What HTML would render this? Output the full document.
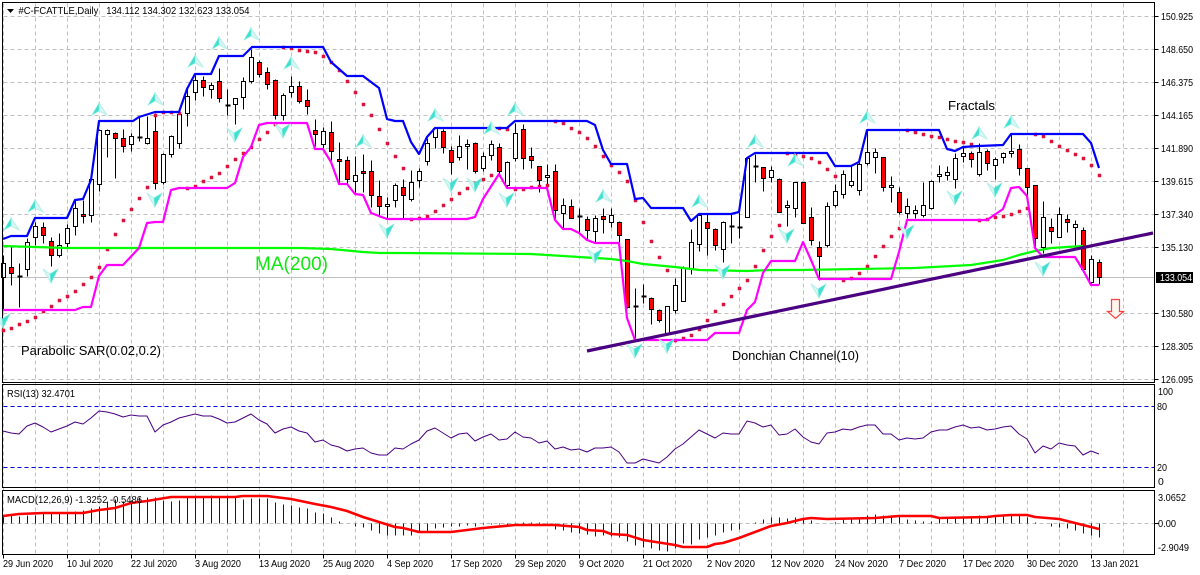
<!DOCTYPE html>
<html lang="en"><head><meta charset="utf-8"><title>#C-FCATTLE,Daily</title>
<style>
html,body{margin:0;padding:0;background:#fff;width:1200px;height:575px;overflow:hidden}
svg{display:block}
text{font-family:"Liberation Sans",sans-serif;font-size:10.4px;fill:#000}
.a{font-size:13.3px}
</style></head><body>
<svg xmlns="http://www.w3.org/2000/svg" width="1200" height="575" viewBox="0 0 1200 575">
<defs>
<g id="u"><polygon points="0,0 8,12 0,8" fill="#d6f7f3" stroke="#b4f0ea" stroke-width="1"/><polygon points="0,0 -7,12 0,8" fill="#40e0d0" stroke="#7feadf" stroke-width=".6"/></g>
<g id="d"><polygon points="0,0 -8,-14 -1,-9" fill="#d6f7f3" stroke="#b4f0ea" stroke-width="1"/><polygon points="0,0 7,-14 -1,-9" fill="#40e0d0" stroke="#7feadf" stroke-width=".6"/></g>
</defs>
<rect width="1200" height="575" fill="#fff"/>
<g transform="translate(.5 .5)" fill="none" shape-rendering="crispEdges">
<!-- grid -->
<path stroke="#c0c0c0" stroke-dasharray="4 3" d="M3 3V554M35 3V554M67 3V554M99 3V554M131 3V554M163 3V554M195 3V554M227 3V554M259 3V554M291 3V554M323 3V554M355 3V554M387 3V554M419 3V554M451 3V554M483 3V554M515 3V554M547 3V554M579 3V554M611 3V554M643 3V554M675 3V554M707 3V554M739 3V554M771 3V554M803 3V554M835 3V554M867 3V554M899 3V554M931 3V554M963 3V554M995 3V554M1027 3V554M1059 3V554M1091 3V554M1123 3V554"/>
<path stroke="#c0c0c0" stroke-dasharray="4 3" d="M3 16H1154M3 49H1154M3 82H1154M3 115H1154M3 148H1154M3 181H1154M3 214H1154M3 247H1154M3 313H1154M3 346H1154M3 379H1154M3 523H1154"/>
<path stroke="#c0c0c0" d="M3 277H1154"/>
<!-- wicks -->
<path stroke="#000" d="M3 255V310M11 247V285M19 263V307M27 238V276M35 222V245M43 222V243M51 237V266M59 233V257M67 224V247M75 200V235M83 200V223M91 179V222M99 129V191M107 129V157M115 132V178M123 129V152M131 133V151M139 117V141M147 116V144M155 113V189M163 153V184M171 135V157M179 112V148M187 88V126M195 75V100M203 76V96M211 82V98M219 68V102M227 89V115M235 98V124M243 77V109M251 49V83M259 60V77M267 67V89M275 79V119M283 93V120M291 76V97M299 81V103M307 89V114M315 119V146M323 127V150M331 121V160M339 142V183M347 156V184M355 156V192M363 154V192M371 160V207M379 180V217M387 197V218M395 183V207M403 179V218M411 170V201M419 168V187M427 138V165M435 128V148M443 129V153M451 146V174M459 135V160M467 139V169M475 142V173M483 152V171M491 140V160M499 143V174M507 161V188M515 123V161M523 124V169M531 147V168M539 166V192M547 164V192M555 164V218M563 198V229M571 199V218M579 208V233M587 216V240M595 215V243M603 208V233M611 208V227M619 221V243M627 239V308M635 288V338M643 284V303M651 297V324M659 309V322M667 306V334M675 278V313M683 266V301M691 229V274M699 214V251M707 214V255M715 228V250M723 221V262M731 213V243M739 212V238M747 157V217M755 154V182M763 167V191M771 166V182M779 178V212M787 200V226M795 182V217M803 182V223M811 207V245M819 241V280M827 202V247M835 184V207M843 170V198M851 166V187M859 162V195M867 130V165M875 148V173M883 157V191M891 176V202M899 187V214M907 198V218M915 205V218M923 182V217M931 180V209M939 165V182M947 166V180M955 153V188M963 147V162M971 151V167M979 143V176M987 149V170M995 157V179M1003 152V163M1011 134V157M1019 144V175M1027 168V200M1035 185V248M1043 201V253M1051 218V243M1059 207V237M1067 214V232M1075 220V247M1083 227V272M1091 255V283M1099 259V284"/>
<!-- doji -->
<path stroke="#000" stroke-width="2" d="M17 276h5M137 137h5M225 105h5M577 216h5M633 306h5M641 296h5M729 226h5M737 227h5M753 166h5"/>
<!-- white bodies -->
<path stroke="#000" fill="#fff" d="M1 263h4v14h-4zM25 242h4v27h-4zM33 226h4v11h-4zM57 245h4v10h-4zM65 228h4v15h-4zM73 208h4v18h-4zM89 179h4v36h-4zM97 130h4v54h-4zM105 130h4v4h-4zM129 136h4v8h-4zM145 138h4v5h-4zM161 154h4v28h-4zM169 136h4v18h-4zM177 114h4v29h-4zM185 96h4v17h-4zM193 80h4v12h-4zM209 85h4v4h-4zM233 98h4v6h-4zM241 81h4v16h-4zM249 57h4v24h-4zM281 95h4v20h-4zM289 86h4v6h-4zM321 131h4v13h-4zM353 175h4v6h-4zM385 204h4v2h-4zM393 185h4v15h-4zM409 182h4v17h-4zM417 171h4v9h-4zM425 143h4v18h-4zM433 128h4v9h-4zM457 146h4v11h-4zM465 144h4v2h-4zM481 156h4v12h-4zM489 144h4v11h-4zM505 162h4v23h-4zM513 133h4v25h-4zM545 175h4v2h-4zM561 205h4v8h-4zM593 218h4v13h-4zM609 215h4v7h-4zM665 306h4v27h-4zM673 285h4v25h-4zM681 268h4v33h-4zM689 242h4v27h-4zM697 215h4v29h-4zM721 222h4v27h-4zM745 158h4v59h-4zM769 170h4v7h-4zM785 205h4v2h-4zM793 182h4v26h-4zM825 206h4v39h-4zM833 191h4v14h-4zM841 174h4v20h-4zM849 181h4v4h-4zM857 164h4v26h-4zM865 152h4v11h-4zM873 152h4v5h-4zM889 185h4v2h-4zM905 206h4v7h-4zM913 210h4v3h-4zM921 205h4v10h-4zM929 181h4v27h-4zM937 174h4v2h-4zM945 172h4v3h-4zM953 158h4v21h-4zM961 153h4v3h-4zM977 152h4v22h-4zM993 159h4v6h-4zM1001 153h4v4h-4zM1009 151h4v2h-4zM1041 217h4v30h-4zM1057 214h4v23h-4zM1073 224h4v3h-4zM1089 259h4v23h-4z"/>
<!-- red bodies -->
<path stroke="#000" fill="#f00" d="M9 267h4v6h-4zM41 227h4v8h-4zM49 241h4v14h-4zM81 214h4v2h-4zM113 133h4v5h-4zM121 138h4v8h-4zM153 131h4v52h-4zM201 80h4v7h-4zM217 81h4v17h-4zM257 62h4v12h-4zM265 72h4v12h-4zM273 80h4v35h-4zM297 86h4v15h-4zM305 100h4v6h-4zM313 130h4v4h-4zM329 132h4v19h-4zM337 159h4v2h-4zM345 160h4v19h-4zM361 171h4v2h-4zM369 171h4v24h-4zM377 196h4v10h-4zM401 187h4v8h-4zM441 131h4v16h-4zM449 150h4v12h-4zM473 143h4v28h-4zM497 147h4v24h-4zM521 129h4v29h-4zM529 156h4v4h-4zM537 166h4v14h-4zM553 171h4v39h-4zM569 206h4v12h-4zM585 219h4v11h-4zM601 216h4v3h-4zM617 222h4v13h-4zM625 239h4v68h-4zM649 298h4v11h-4zM657 310h4v10h-4zM705 222h4v6h-4zM713 229h4v16h-4zM761 167h4v11h-4zM777 179h4v33h-4zM801 182h4v41h-4zM809 217h4v23h-4zM817 247h4v9h-4zM881 157h4v30h-4zM897 192h4v20h-4zM969 153h4v6h-4zM985 151h4v12h-4zM1017 149h4v19h-4zM1025 168h4v19h-4zM1033 185h4v53h-4zM1049 227h4v4h-4zM1065 219h4v3h-4zM1081 230h4v39h-4zM1097 262h4v15h-4z"/>
<!-- MACD bars -->
<path stroke="#0000e0" d="M3 523V515M11 523V515M19 523V516M27 523V515M35 523V515M43 523V513M51 523V513M59 523V513M67 523V513M75 523V511M83 523V510M91 523V508M99 523V506M107 523V501M115 523V499M123 523V501M131 523V500M139 523V497M147 523V497M155 523V497M163 523V500M171 523V501M179 523V500M187 523V497M195 523V497M203 523V497M211 523V495M219 523V497M227 523V497M235 523V497M243 523V499M251 523V498M259 523V498M267 523V498M275 523V502M283 523V504M291 523V505M299 523V507M307 523V508M315 523V512M323 523V513M331 523V517M339 523V521M355 523V526M363 523V527M371 523V530M379 523V533M387 523V535M395 523V535M403 523V535M411 523V535M419 523V532M427 523V531M435 523V528M443 523V527M451 523V526M459 523V526M467 523V525M475 523V526M483 523V524M491 523V524M499 523V524M507 523V524M515 523V524M523 523V522M531 523V522M539 523V522M547 523V524M555 523V529M563 523V530M571 523V532M579 523V533M587 523V534M595 523V536M603 523V535M611 523V536M619 523V537M627 523V541M635 523V545M643 523V547M651 523V548M659 523V550M667 523V551M675 523V548M683 523V543M691 523V544M699 523V539M707 523V537M715 523V535M723 523V532M731 523V530M739 523V529M755 523V522M763 523V519M771 523V517M779 523V517M787 523V518M795 523V517M803 523V518M811 523V520M835 523V522M843 523V519M851 523V519M859 523V517M867 523V515M875 523V514M883 523V515M891 523V515M899 523V516M907 523V519M915 523V520M923 523V521M931 523V521M939 523V518M947 523V518M955 523V518M963 523V516M971 523V516M979 523V515M987 523V516M995 523V516M1003 523V516M1011 523V515M1019 523V515M1027 523V517M1035 523V522M1051 523V526M1059 523V527M1067 523V528M1075 523V530M1083 523V533M1091 523V535M1099 523V537"/>
<!-- RSI levels -->
<path stroke="#0000e0" stroke-dasharray="4 3" d="M3 406H1154M3 467H1154"/>
<!-- frames -->
<path stroke="#000" d="M2 2H1154V382H2ZM2 384H1154V487H2ZM2 490H1154V554H2Z"/>
<path stroke="#000" d="M1154 16h4M1154 49h4M1154 82h4M1154 115h4M1154 148h4M1154 181h4M1154 214h4M1154 247h4M1154 313h4M1154 346h4M1154 379h4M1154 523h4M3 554v4M67 554v4M131 554v4M195 554v4M259 554v4M323 554v4M387 554v4M451 554v4M515 554v4M579 554v4M643 554v4M707 554v4M771 554v4M835 554v4M899 554v4M963 554v4M1027 554v4M1091 554v4"/>
</g>
<!-- SAR -->
<g fill="#dc143c" stroke="#dc143c" stroke-width=".5"><path d="M2 329h3v3h-3zM10 327h3v3h-3zM18 323h3v3h-3zM26 320h3v3h-3zM34 316h3v3h-3zM42 310h3v3h-3zM50 305h3v3h-3zM58 299h3v3h-3zM66 295h3v3h-3zM74 290h3v3h-3zM82 283h3v3h-3zM90 276h3v3h-3zM98 266h3v3h-3zM106 248h3v3h-3zM114 233h3v3h-3zM122 219h3v3h-3zM130 208h3v3h-3zM138 197h3v3h-3zM146 186h3v3h-3zM154 114h3v3h-3zM162 111h3v3h-3zM170 111h3v3h-3zM178 112h3v3h-3zM186 187h3v3h-3zM194 185h3v3h-3zM202 180h3v3h-3zM210 176h3v3h-3zM218 172h3v3h-3zM226 165h3v3h-3zM234 158h3v3h-3zM242 152h3v3h-3zM250 146h3v3h-3zM258 138h3v3h-3zM266 131h3v3h-3zM274 123h3v3h-3zM282 46h3v3h-3zM290 47h3v3h-3zM298 49h3v3h-3zM306 50h3v3h-3zM314 51h3v3h-3zM322 55h3v3h-3zM330 61h3v3h-3zM338 69h3v3h-3zM346 80h3v3h-3zM354 91h3v3h-3zM362 103h3v3h-3zM370 114h3v3h-3zM378 128h3v3h-3zM386 142h3v3h-3zM394 155h3v3h-3zM402 167h3v3h-3zM410 218h3v3h-3zM418 217h3v3h-3zM426 215h3v3h-3zM434 210h3v3h-3zM442 204h3v3h-3zM450 198h3v3h-3zM458 192h3v3h-3zM466 187h3v3h-3zM474 182h3v3h-3zM482 178h3v3h-3zM490 174h3v3h-3zM498 127h3v3h-3zM506 128h3v3h-3zM514 188h3v3h-3zM522 188h3v3h-3zM530 186h3v3h-3zM538 185h3v3h-3zM546 184h3v3h-3zM554 120h3v3h-3zM562 122h3v3h-3zM570 127h3v3h-3zM578 131h3v3h-3zM586 137h3v3h-3zM594 145h3v3h-3zM602 155h3v3h-3zM610 164h3v3h-3zM618 171h3v3h-3zM626 180h3v3h-3zM634 199h3v3h-3zM642 221h3v3h-3zM650 240h3v3h-3zM658 256h3v3h-3zM666 269h3v3h-3zM674 339h3v3h-3zM682 337h3v3h-3zM690 334h3v3h-3zM698 328h3v3h-3zM706 319h3v3h-3zM714 310h3v3h-3zM722 303h3v3h-3zM730 295h3v3h-3zM738 287h3v3h-3zM746 279h3v3h-3zM754 265h3v3h-3zM762 249h3v3h-3zM770 235h3v3h-3zM778 224h3v3h-3zM786 152h3v3h-3zM794 154h3v3h-3zM802 155h3v3h-3zM810 157h3v3h-3zM818 161h3v3h-3zM826 168h3v3h-3zM834 175h3v3h-3zM842 279h3v3h-3zM850 277h3v3h-3zM858 272h3v3h-3zM866 265h3v3h-3zM874 255h3v3h-3zM882 245h3v3h-3zM890 235h3v3h-3zM898 227h3v3h-3zM906 129h3v3h-3zM914 131h3v3h-3zM922 133h3v3h-3zM930 135h3v3h-3zM938 136h3v3h-3zM946 138h3v3h-3zM954 140h3v3h-3zM962 141h3v3h-3zM970 143h3v3h-3zM978 219h3v3h-3zM986 218h3v3h-3zM994 216h3v3h-3zM1002 215h3v3h-3zM1010 213h3v3h-3zM1018 210h3v3h-3zM1026 207h3v3h-3zM1034 133h3v3h-3zM1042 135h3v3h-3zM1050 140h3v3h-3zM1058 145h3v3h-3zM1066 149h3v3h-3zM1074 153h3v3h-3zM1082 157h3v3h-3zM1090 164h3v3h-3zM1098 174h3v3h-3z"/></g>
<!-- lines -->
<g fill="none" stroke-linejoin="round">
<polyline stroke="#00ff00" stroke-width="2.2" points="3,246 67,248 227,248 300,248 331,249 363,252 380,253 400,253 531,254 563,256 611,259 627,261 643,264 675,267 699,270 747,271 771,270 800,270 915,268 971,265 1003,260 1019,255 1035,251 1051,248 1083,246"/>
<polyline stroke="#ff00ff" stroke-width="2.2" points="3,310 75,310 83,307 91,307 99,276 107,265 123,265 139,248 147,223 155,222 163,222 171,190 179,188 227,188 235,183 243,157 251,147 259,125 267,123 307,123 315,149 323,149 331,162 339,184 347,184 355,194 363,195 371,213 379,216 387,219 467,219 475,217 483,199 499,174 507,188 547,188 555,220 563,229 571,229 579,233 587,240 595,243 619,243 627,318 635,340 707,340 715,333 739,333 747,310 755,302 763,273 771,261 795,261 803,242 811,260 819,279 891,279 899,252 907,220 987,220 1003,209 1011,188 1019,187 1027,196 1035,248 1043,257 1075,257 1083,270 1091,285 1099,285"/>
<polyline stroke="#0000ff" stroke-width="2.2" points="3,239 11,236 27,236 35,218 67,218 75,200 83,199 91,180 99,121 133,121 139,117 155,112 179,112 187,89 195,74 211,74 219,56 243,56 252,47 323,47 331,62 347,76 363,76 379,88 387,119 395,121 403,121 411,142 419,154 427,137 435,128 507,128 515,121 587,121 595,125 603,150 611,164 627,164 635,199 643,198 651,208 683,208 691,221 699,214 731,214 739,212 747,158 755,153 827,153 835,166 851,166 859,162 867,130 939,130 947,149 955,151 963,147 979,146 1003,145 1011,134 1083,134 1091,143 1099,168"/>
<polyline stroke="#ff0000" stroke-width="2.6" points="3,516 19,514 43,513 83,513 99,510 115,508 131,503 147,501 171,497 235,497 243,496 267,496 291,499 315,504 331,507 347,511 363,517 379,522 395,527 403,528 419,532 451,532 483,528 515,525 555,525 579,527 587,530 603,531 611,534 627,535 643,540 675,545 683,547 707,547 715,544 723,543 739,538 771,526 787,523 803,519 811,518 827,519 875,518 899,516 931,516 939,518 987,517 995,516 1011,515 1027,515 1035,517 1059,519 1075,523 1099,529"/>
<polyline stroke="#4b0082" stroke-width="1" points="3,431 11,433 19,434 27,426 35,423 43,427 51,432 59,429 67,426 75,422 83,424 91,418 99,411 107,412 115,414 123,417 131,415 139,416 147,416 155,432 163,425 171,422 179,418 187,416 195,414 203,416 211,416 219,419 227,423 235,422 243,418 251,414 259,420 267,424 275,433 283,429 291,427 299,431 307,433 315,442 323,440 331,445 339,447 347,451 355,449 363,448 371,453 379,455 387,455 395,448 403,449 411,444 419,440 427,431 435,428 443,433 451,438 459,434 467,433 475,441 483,437 491,434 499,440 507,439 515,432 523,437 531,438 539,443 547,441 555,449 563,447 571,450 579,449 587,452 595,448 603,448 611,447 619,452 627,463 635,463 643,459 651,461 659,463 667,457 675,449 683,444 691,437 699,430 707,434 715,438 723,433 731,434 739,434 747,421 755,423 763,427 771,425 779,435 787,434 795,429 803,437 811,442 819,444 827,433 835,432 843,429 851,430 859,427 867,425 875,425 883,434 891,434 899,440 907,438 915,439 923,438 931,432 939,430 947,430 955,427 963,425 971,428 979,427 987,430 995,429 1003,427 1011,426 1019,434 1027,439 1035,453 1043,446 1051,449 1059,443 1067,445 1075,446 1083,455 1091,451 1099,454"/>
<line x1="587" y1="351" x2="1153" y2="233" stroke="#4b0082" stroke-width="3.2"/>
</g>
<!-- fractals -->
<use href="#u" x="99" y="103"/><use href="#u" x="155" y="93"/><use href="#u" x="195" y="55"/><use href="#u" x="219" y="37"/><use href="#u" x="251" y="28"/><use href="#u" x="291" y="57"/><use href="#u" x="363" y="135"/><use href="#u" x="435" y="109"/><use href="#u" x="515" y="103"/><use href="#u" x="491" y="122"/><use href="#u" x="603" y="190"/><use href="#u" x="699" y="195"/><use href="#u" x="755" y="135"/><use href="#u" x="795" y="154"/><use href="#u" x="867" y="111"/><use href="#u" x="979" y="127"/><use href="#u" x="1011" y="116"/><use href="#u" x="35" y="200"/><use href="#u" x="11" y="218"/>
<use href="#d" x="235" y="142"/><use href="#d" x="283" y="138"/><use href="#d" x="155" y="207"/><use href="#d" x="51" y="283"/><use href="#d" x="387" y="238"/><use href="#d" x="3" y="328"/><use href="#d" x="451" y="192"/><use href="#d" x="475" y="192"/><use href="#d" x="507" y="207"/><use href="#d" x="595" y="263"/><use href="#d" x="635" y="358"/><use href="#d" x="667" y="353"/><use href="#d" x="723" y="279"/><use href="#d" x="787" y="243"/><use href="#d" x="819" y="298"/><use href="#d" x="907" y="239"/><use href="#d" x="955" y="205"/><use href="#d" x="995" y="197"/><use href="#d" x="1043" y="276"/>
<!-- red arrow -->
<path d="M1111.5 299.5h8v12h4l-8 7-8-7h4z" fill="#fff6f0" stroke="#ff4040" stroke-width="1.2"/>
<!-- header -->
<path d="M7 9h7l-3.500 4z" fill="#000"/>
<text x="18.500" y="14" textLength="231" lengthAdjust="spacingAndGlyphs">#C-FCATTLE,Daily&#160;&#160; 134.112 134.302 132.623 133.054</text>
<text x="7" y="397" textLength="68" lengthAdjust="spacingAndGlyphs">RSI(13) 32.4701</text>
<text x="7" y="503" textLength="135" lengthAdjust="spacingAndGlyphs">MACD(12,26,9) -1.3252 -0.5486</text>
<!-- annotations -->
<text class="a" x="948" y="110" textLength="47" lengthAdjust="spacingAndGlyphs">Fractals</text>
<text class="a" x="732" y="360" textLength="127" lengthAdjust="spacingAndGlyphs">Donchian Channel(10)</text>
<text class="a" x="21" y="355" textLength="140" lengthAdjust="spacingAndGlyphs">Parabolic SAR(0.02,0.2)</text>
<text x="255" y="270" style="font-size:19.5px;fill:#10e610" textLength="73" lengthAdjust="spacingAndGlyphs">MA(200)</text>
<!-- price axis -->
<g>
<text x="1161" y="20" textLength="32" lengthAdjust="spacingAndGlyphs">150.925</text>
<text x="1161" y="53" textLength="32" lengthAdjust="spacingAndGlyphs">148.650</text>
<text x="1161" y="86" textLength="32" lengthAdjust="spacingAndGlyphs">146.375</text>
<text x="1161" y="119" textLength="32" lengthAdjust="spacingAndGlyphs">144.165</text>
<text x="1161" y="152" textLength="32" lengthAdjust="spacingAndGlyphs">141.890</text>
<text x="1161" y="185" textLength="32" lengthAdjust="spacingAndGlyphs">139.615</text>
<text x="1161" y="218" textLength="32" lengthAdjust="spacingAndGlyphs">137.340</text>
<text x="1161" y="251" textLength="32" lengthAdjust="spacingAndGlyphs">135.130</text>
<text x="1161" y="317" textLength="32" lengthAdjust="spacingAndGlyphs">130.580</text>
<text x="1161" y="350" textLength="32" lengthAdjust="spacingAndGlyphs">128.305</text>
<text x="1161" y="383" textLength="32" lengthAdjust="spacingAndGlyphs">126.095</text>
<rect x="1156" y="272" width="37" height="11" fill="#000"/>
<text x="1160" y="281" textLength="32" lengthAdjust="spacingAndGlyphs" style="fill:#fff">133.054</text>
<text x="1158" y="395" textLength="15" lengthAdjust="spacingAndGlyphs">100</text>
<text x="1157" y="410" textLength="10" lengthAdjust="spacingAndGlyphs">80</text>
<text x="1157" y="471" textLength="10" lengthAdjust="spacingAndGlyphs">20</text>
<text x="1158" y="485">0</text>
<text x="1158" y="501" textLength="28" lengthAdjust="spacingAndGlyphs">3.0652</text>
<text x="1158" y="527" textLength="18" lengthAdjust="spacingAndGlyphs">0.00</text>
<text x="1158" y="551" textLength="31" lengthAdjust="spacingAndGlyphs">-2.9049</text>
</g>
<!-- time axis -->
<g>
<text x="3" y="567" textLength="50" lengthAdjust="spacingAndGlyphs">29 Jun 2020</text>
<text x="67" y="567" textLength="46" lengthAdjust="spacingAndGlyphs">10 Jul 2020</text>
<text x="131" y="567" textLength="46" lengthAdjust="spacingAndGlyphs">22 Jul 2020</text>
<text x="195" y="567" textLength="46" lengthAdjust="spacingAndGlyphs">3 Aug 2020</text>
<text x="259" y="567" textLength="51" lengthAdjust="spacingAndGlyphs">13 Aug 2020</text>
<text x="323" y="567" textLength="51" lengthAdjust="spacingAndGlyphs">25 Aug 2020</text>
<text x="387" y="567" textLength="46" lengthAdjust="spacingAndGlyphs">4 Sep 2020</text>
<text x="451" y="567" textLength="51" lengthAdjust="spacingAndGlyphs">17 Sep 2020</text>
<text x="515" y="567" textLength="51" lengthAdjust="spacingAndGlyphs">29 Sep 2020</text>
<text x="579" y="567" textLength="45" lengthAdjust="spacingAndGlyphs">9 Oct 2020</text>
<text x="643" y="567" textLength="49" lengthAdjust="spacingAndGlyphs">21 Oct 2020</text>
<text x="707" y="567" textLength="48" lengthAdjust="spacingAndGlyphs">2 Nov 2020</text>
<text x="771" y="567" textLength="53" lengthAdjust="spacingAndGlyphs">12 Nov 2020</text>
<text x="835" y="567" textLength="53" lengthAdjust="spacingAndGlyphs">24 Nov 2020</text>
<text x="899" y="567" textLength="47" lengthAdjust="spacingAndGlyphs">7 Dec 2020</text>
<text x="963" y="567" textLength="51" lengthAdjust="spacingAndGlyphs">17 Dec 2020</text>
<text x="1027" y="567" textLength="51" lengthAdjust="spacingAndGlyphs">30 Dec 2020</text>
<text x="1091" y="567" textLength="48" lengthAdjust="spacingAndGlyphs">13 Jan 2021</text>
</g>
</svg>
</body></html>
